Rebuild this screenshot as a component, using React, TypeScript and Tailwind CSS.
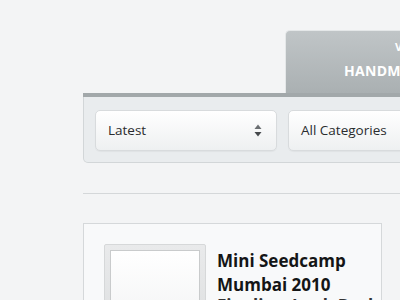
import React from "react";

function Arrows() {
  return (
    <svg width="8" height="13" viewBox="0 0 8 13" className="shrink-0">
      <path d="M4 0.5 L7.5 5 L0.5 5 Z" fill="#6b6f72" />
      <path d="M4 12.5 L7.5 8 L0.5 8 Z" fill="#45494c" />
    </svg>
  );
}

function Select({ label, arrows }: { label: string; arrows?: boolean }) {
  return (
    <div className="flex h-[41px] w-[182px] shrink-0 items-center justify-between rounded-[5px] border border-[#d8dbdd] bg-gradient-to-b from-[#ffffff] to-[#eef0f1] pl-[12px] pr-[14px] shadow-[0_1px_1px_rgba(0,0,0,0.04)]">
      <span className="text-[13.5px] text-[#2a2c2e]">{label}</span>
      {arrows && <Arrows />}
    </div>
  );
}

export default function App() {
  return (
    <div
      className="h-[300px] w-[400px] overflow-hidden bg-[#f3f4f5]"
      style={{ fontFamily: '"Open Sans", "Noto Sans", sans-serif' }}
    >
      <div className="w-[560px] pl-[83px] pt-[30px]">
        <div className="flex pl-[202px]">
          <div className="flex h-[63px] w-[260px] flex-col rounded-tl-[5px] border-l border-t border-[#e4e7e8] bg-gradient-to-b from-[#c0c5c7] to-[#aab0b2] pl-[58px] pt-[9px] text-white">
            <span className="pl-[51px] text-[11px] font-bold leading-[14px] tracking-[0.5px]">VIEW</span>
            <span className="mt-[8px] text-[14px] font-bold leading-[18px] tracking-[0.3px]">HANDMADE</span>
          </div>
        </div>
        <div className="h-[4px] bg-[#a2a8aa]" />
        <div className="flex gap-[11px] rounded-bl-[5px] border border-t-0 border-[#d2d6d8] bg-[#e9ecee] pb-[11px] pl-[11px] pt-[13px]">
          <Select label="Latest" arrows />
          <Select label="All Categories" arrows />
        </div>
        <div className="mt-[30px] h-px w-[400px] bg-[#d4d7d9]" />
        <div className="mt-[29px] flex w-[299px] gap-[11px] border border-[#d5d8da] bg-[#f8f9fa] pl-[20px] pt-[20px] pb-[40px]">
          <div className="h-[100px] w-[102px] shrink-0 rounded-[2px] border border-[#d6d8d9] bg-gradient-to-b from-[#e9eaeb] to-[#dcdedf] p-[5px]">
            <div className="h-full w-full border border-[#c9cbcc] bg-gradient-to-b from-[#ffffff] to-[#f1f2f3]" />
          </div>
          <div className="pt-[5px] text-[17px] font-bold leading-[24px] text-[#141516]">
            <div>Mini Seedcamp</div>
            <div>Mumbai 2010</div>
            <div className="-mt-[3px] text-[#333]">Finalists Look Back</div>
          </div>
        </div>
      </div>
    </div>
  );
}
